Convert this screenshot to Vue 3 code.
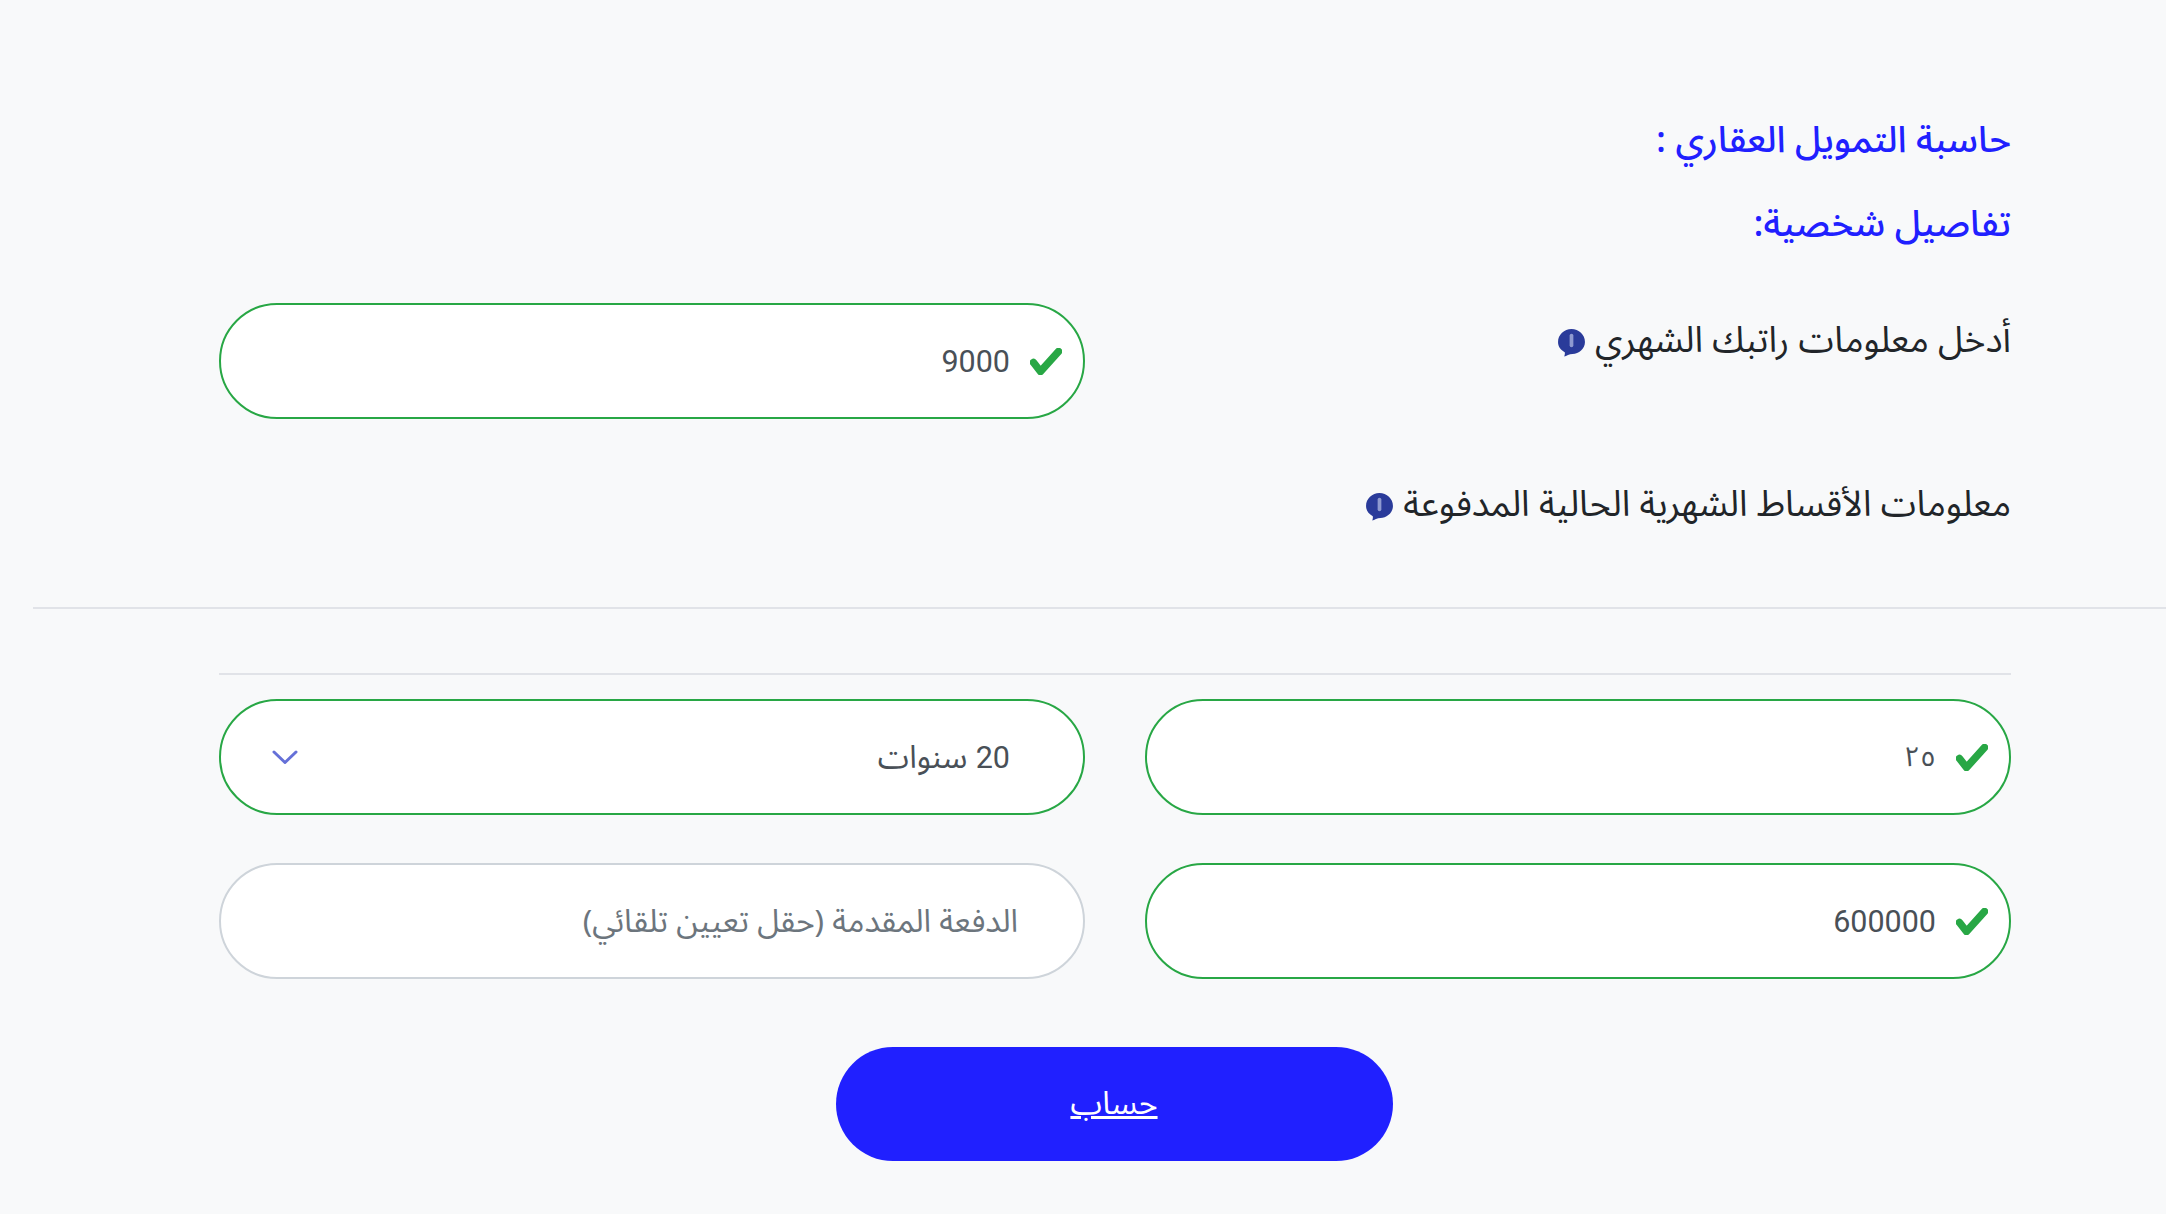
<template>
  <div class="page" dir="rtl">
    <h4 class="heading">حاسبة التمويل العقاري :</h4>
    <h4 class="heading">تفاصيل شخصية:</h4>

    <!-- راتب -->
    <div class="form-row">
      <label class="field-label">
        أدخل معلومات راتبك الشهري
        <svg class="info-icon" viewBox="0 0 28 28"><path d="M14 1C21 1 27 6.500 27 13.500 27 20 21 25 15 25 12 25 9 27 7 27.500 7.500 26 7.800 24.800 7.500 23.500 3.500 21 1 18 1 13.500 1 6.500 7 1 14 1Z" /><rect x="12.200" y="5.500" width="3.600" height="13" rx="1.800" class="info-mark" /></svg>
      </label>
      <div class="field field--valid">
        <svg class="check" viewBox="0 0 32 27"><path d="M3.500 14.500 10.500 23.500 28.500 3.500" /></svg>
        <input class="field-input field-input--digits" type="text" value="9000" readonly />
      </div>
    </div>

    <!-- أقساط -->
    <label class="field-label label-installments">
      معلومات الأقساط الشهرية الحالية المدفوعة
      <svg class="info-icon" viewBox="0 0 28 28"><path d="M14 1C21 1 27 6.500 27 13.500 27 20 21 25 15 25 12 25 9 27 7 27.500 7.500 26 7.800 24.800 7.500 23.500 3.500 21 1 18 1 13.500 1 6.500 7 1 14 1Z" /><rect x="12.200" y="5.500" width="3.600" height="13" rx="1.800" class="info-mark" /></svg>
    </label>

    <hr class="rule rule--wide" />
    <hr class="rule" />

    <div class="grid">
      <div class="field field--valid">
        <svg class="check" viewBox="0 0 32 27"><path d="M3.500 14.500 10.500 23.500 28.500 3.500" /></svg>
        <input class="field-input field-input--age" type="text" value="٢٥" readonly />
      </div>

      <div class="field field--select field--valid">
        <span class="field-input"><span class="digits">20</span> سنوات</span>
        <svg class="chevron" viewBox="0 0 26 14"><path d="M2 2 13 12.500 24 2" /></svg>
      </div>

      <div class="field field--valid">
        <svg class="check" viewBox="0 0 32 27"><path d="M3.500 14.500 10.500 23.500 28.500 3.500" /></svg>
        <input class="field-input field-input--digits" type="text" value="600000" readonly />
      </div>

      <div class="field field--plain">
        <input class="field-input" type="text" placeholder="الدفعة المقدمة (حقل تعيين تلقائي)" readonly />
      </div>
    </div>

    <div class="actions">
      <a href="#" class="btn-calc" @click.prevent>حساب</a>
    </div>
  </div>
</template>

<script setup>
</script>

<style>
html, body {
  margin: 0;
  background: #f8f9fa;
  overflow: hidden;
}
</style>

<style scoped>
.page {
  box-sizing: border-box;
  width: 2166px;
  height: 1214px;
  padding: 117px 155px 0 219px;
  background: #f8f9fa;
  color: #212529;
  font-family: "Noto Sans Arabic", "Noto Sans", "DejaVu Sans", sans-serif;
  overflow: hidden;
}

.heading {
  margin: 0 0 37px;
  font-size: 36.6px;
  line-height: 47px;
  font-weight: 500;
  color: #2020ff;
}

.form-row {
  display: grid;
  grid-template-columns: minmax(0, 1fr) minmax(0, 1fr);
  column-gap: 60px;
  margin-top: 55px;
}

.field-label {
  display: block;
  font-size: 35.9px;
  line-height: 47px;
  margin-top: 14px;
}

.label-installments {
  margin-top: 62px;
}

.info-icon {
  width: 29px;
  height: 29px;
  vertical-align: -5px;
  fill: #2a3b9a;
}

.info-mark {
  fill: #8f9ad0;
}

.rule {
  border: 0;
  border-top: 2px solid #e1e3e8;
  margin: 64px 0 0;
}

.rule--wide {
  margin: 79px -155px 0 -186px;
}

.grid {
  display: grid;
  grid-template-columns: minmax(0, 1fr) minmax(0, 1fr);
  column-gap: 60px;
  row-gap: 48px;
  margin-top: 24px;
}

.field {
  box-sizing: border-box;
  height: 116px;
  display: flex;
  align-items: center;
  padding: 0 21px 0 51px;
  background: #fff;
  border: 2px solid #ced4da;
  border-radius: 58px;
}

.field--valid {
  border-color: #28a745;
}

.field--select {
  padding-right: 73px;
}

.field--plain {
  padding-right: 65px;
}

.check {
  flex: none;
  width: 32px;
  height: 27px;
  margin-left: 20px;
  fill: none;
  stroke: #28a745;
  stroke-width: 7.500;
  stroke-linecap: round;
  stroke-linejoin: round;
}

.field-input {
  flex: 1;
  min-width: 0;
  border: 0;
  outline: 0;
  padding: 0;
  background: transparent;
  font: inherit;
  font-size: 31.7px;
  color: #495057;
}

.field-input--digits,
.digits {
  font-family: "Roboto", sans-serif;
  font-size: 30.5px;
}

.field-input--age {
  font-size: 28px;
}

.field-input::placeholder {
  color: #6c757d;
  opacity: 1;
}

.chevron {
  flex: none;
  width: 26px;
  height: 14px;
  fill: none;
  stroke: #6570d8;
  stroke-width: 3;
  stroke-linecap: round;
  stroke-linejoin: round;
}

.actions {
  display: flex;
  justify-content: center;
  padding-right: 2px;
  margin-top: 68px;
}

.btn-calc {
  width: 557px;
  height: 114px;
  border-radius: 57px;
  background: #2020ff;
  color: #fff;
  font-size: 32px;
  line-height: 114px;
  text-align: center;
  text-decoration: underline;
}
</style>
